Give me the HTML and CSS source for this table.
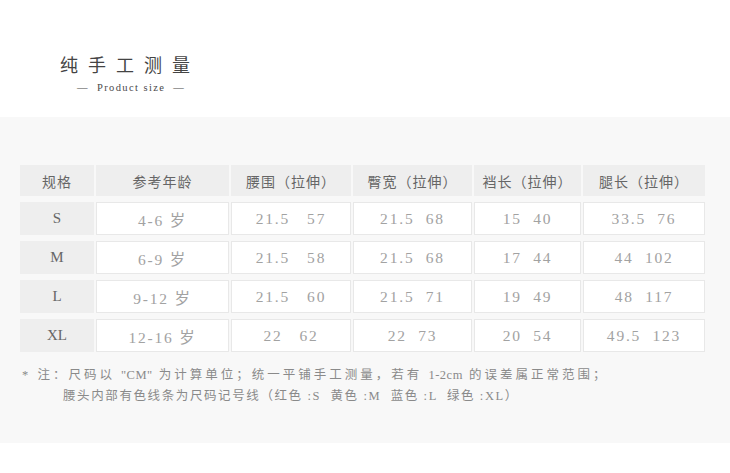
FILE: index.html
```html
<!DOCTYPE html>
<html lang="zh">
<head>
<meta charset="utf-8">
<title>纯手工测量</title>
<link rel="stylesheet" href="styles.css">
</head>
<body>
<header class="top">
  <h1 class="title">纯手工测量</h1>
  <div class="subtitle"><span class="dash">—</span>Product size<span class="dash">—</span></div>
</header>
<section class="band">
  <div class="table">
    <div class="cell head">规格</div>
    <div class="cell head">参考年龄</div>
    <div class="cell head">腰围（拉伸）</div>
    <div class="cell head">臀宽（拉伸）</div>
    <div class="cell head">裆长（拉伸）</div>
    <div class="cell head">腿长（拉伸）</div>

    <div class="cell size">S</div>
    <div class="cell data">4-6 岁</div>
    <div class="cell data">21.5   57</div>
    <div class="cell data">21.5  68</div>
    <div class="cell data">15  40</div>
    <div class="cell data">33.5  76</div>

    <div class="cell size">M</div>
    <div class="cell data">6-9 岁</div>
    <div class="cell data">21.5   58</div>
    <div class="cell data">21.5  68</div>
    <div class="cell data">17  44</div>
    <div class="cell data">44  102</div>

    <div class="cell size">L</div>
    <div class="cell data">9-12 岁</div>
    <div class="cell data">21.5   60</div>
    <div class="cell data">21.5  71</div>
    <div class="cell data">19  49</div>
    <div class="cell data">48  117</div>

    <div class="cell size">XL</div>
    <div class="cell data">12-16 岁</div>
    <div class="cell data">22   62</div>
    <div class="cell data">22  73</div>
    <div class="cell data">20  54</div>
    <div class="cell data">49.5  123</div>
  </div>
  <div class="notes">
    <p class="note first">* 注：尺码以 <span class="latin">"CM"</span> 为计算单位；统一平铺手工测量，若有 <span class="latin">1-2cm</span> 的误差属正常范围；</p>
    <p class="note indent">腰头内部有色线条为尺码记号线（红色 :S  黄色 :M  蓝色 :L  绿色 :XL）</p>
  </div>
</section>
</body>
</html>
```

FILE: styles.css
```css
html, body {
  margin: 0;
  padding: 0;
  background: #ffffff;
}
body {
  width: 730px;
  height: 473px;
  overflow: hidden;
  font-family: "Liberation Serif", "Noto Sans CJK SC", serif;
}
.top {
  height: 117px;
  box-sizing: border-box;
  padding: 52px 0 0 60px;
}
.title {
  margin: 0;
  font-family: "Noto Sans CJK SC", sans-serif;
  font-weight: 400;
  font-size: 18px;
  line-height: 24px;
  letter-spacing: 10px;
  color: #444;
}
.subtitle {
  margin: 6px 0 0 9px;
  font-family: "Liberation Serif", serif;
  font-size: 10.5px;
  letter-spacing: 1.4px;
  color: #4a4a4a;
  line-height: 12px;
}
.dash {
  margin: 0 8px;
}
.band {
  background: #f8f8f8;
  height: 326px;
  box-sizing: border-box;
  padding: 48px 0 0 20px;
}
.table {
  display: grid;
  grid-template-columns: 74px 133px 120px 119px 107px 122px;
  grid-template-rows: 31px 33px 33px 33px 33px;
  column-gap: 2px;
  row-gap: 6px;
}
.cell {
  display: flex;
  align-items: center;
  justify-content: center;
  box-sizing: border-box;
  white-space: pre;
}
.head {
  background: #eeeeee;
  font-family: "Noto Sans CJK SC", sans-serif;
  font-size: 14px;
  color: #666;
  letter-spacing: 1px;
}
.size {
  background: #eeeeee;
  font-family: "Liberation Serif", serif;
  font-size: 15px;
  color: #666;
}
.data {
  background: #ffffff;
  border: 1px solid #e8e8e8;
  font-family: "Liberation Serif", "Noto Sans CJK SC", serif;
  font-size: 15.5px;
  letter-spacing: 1.8px;
  color: #a2a2a2;
}
.notes {
  margin-top: 13px;
}
.note {
  margin: 0;
  font-family: "Liberation Serif", "Noto Sans CJK SC", serif;
  font-size: 12.5px;
  line-height: 21px;
  letter-spacing: 1.6px;
  color: #8a8a8a;
  white-space: pre;
}
.first {
  padding-left: 2px;
  letter-spacing: 3px;
}
.latin {
  letter-spacing: 0.5px;
}
.indent {
  padding-left: 43px;
}
```
